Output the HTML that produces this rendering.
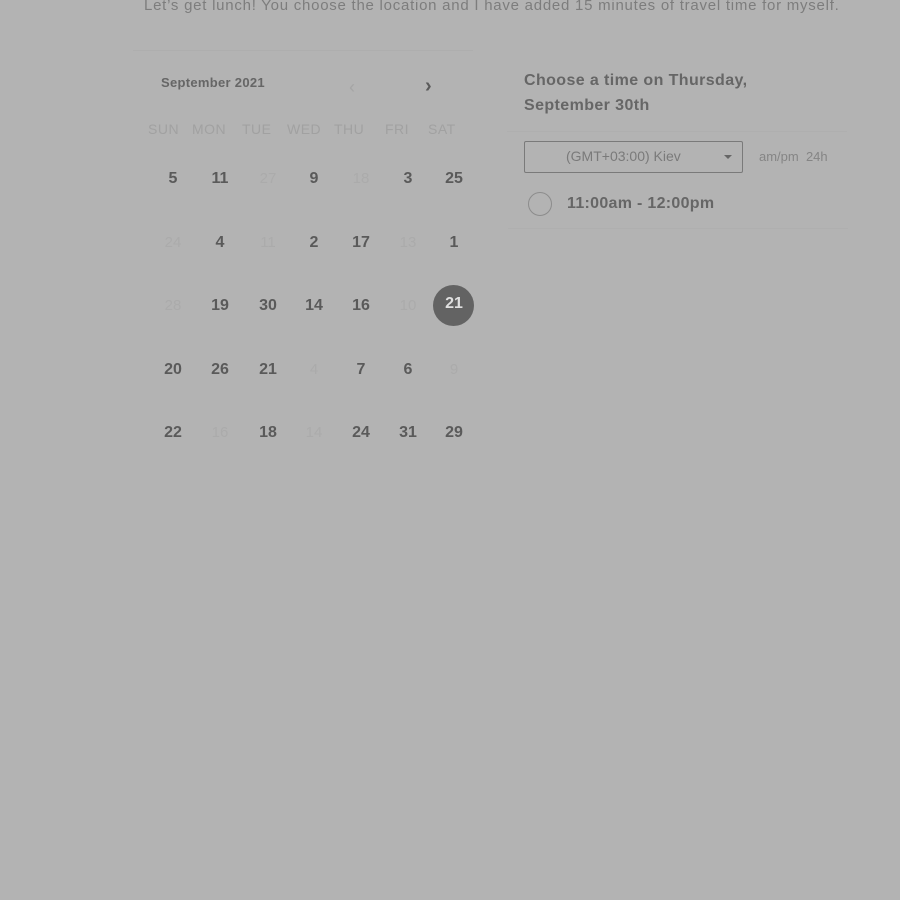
<!DOCTYPE html>
<html><head><meta charset="utf-8"><style>
body{margin:0;width:900px;height:900px;background:#b3b3b3;font-family:"Liberation Sans",sans-serif;position:relative;overflow:hidden}
.a{position:absolute;white-space:nowrap}
.n{position:absolute;width:40px;margin-left:-20px;text-align:center;font-size:16px;font-weight:bold;color:#5a5a5a}
.f{color:#ababab;font-weight:normal;font-size:15px}
.d{position:absolute;font-size:14px;color:#a1a1a1;letter-spacing:.5px}
</style></head><body>
<div class="a" style="left:144px;top:-3px;font-size:15px;color:#7d7d7d;letter-spacing:.75px">Let’s get lunch! You choose the location and I have added 15 minutes of travel time for myself.</div>
<div class="a" style="left:133px;top:50px;width:340px;border-top:1px solid #aeaeae"></div>
<div class="a" style="left:161px;top:75px;font-size:13px;font-weight:bold;color:#666;letter-spacing:.3px">September 2021</div>
<div class="a" style="left:349px;top:77px;font-size:18px;color:#a5a5a5">‹</div>
<div class="a" style="left:425px;top:75px;font-size:20px;color:#5a5a5a;font-weight:bold">›</div>
<div class="d" style="left:148px;top:121px">SUN</div>
<div class="d" style="left:192px;top:121px">MON</div>
<div class="d" style="left:242px;top:121px">TUE</div>
<div class="d" style="left:287px;top:121px">WED</div>
<div class="d" style="left:334px;top:121px">THU</div>
<div class="d" style="left:385px;top:121px">FRI</div>
<div class="d" style="left:428px;top:121px">SAT</div>
<div class="a" style="left:433px;top:285px;width:41px;height:41px;border-radius:50%;background:#636363"></div>
<div id="g"></div>
<script>
var r=[[179,"5,11,27f,9,18f,3,25"],[243,"24f,4,11f,2,17,13f,1"],[306,"28f,19,30,14,16,10f,21s"],[370,"20,26,21,4f,7,6,9f"],[433,"22,16f,18,14f,24,31,29"]];
var xs=[172,219,267,313,360,407,453],h="";
r.forEach(function(w){w[1].split(",").forEach(function(v,i){var c="n",s="";if(v.endsWith("f")){c+=" f";v=v.slice(0,-1)}if(v.endsWith("s")){v=v.slice(0,-1);s="color:#e0e0e0;top:0;"}h+='<div class="'+c+'" style="'+s+'left:'+(xs[i]+1)+'px;top:'+(w[0]-9-(s?2:0))+'px">'+v+'</div>'})});
document.getElementById("g").innerHTML=h;
</script>
<div class="a" style="left:524px;top:68px;font-size:16px;font-weight:bold;color:#666;line-height:25px;letter-spacing:.4px">Choose a time on Thursday,<br>September 30th</div>
<div class="a" style="left:507px;top:131px;width:340px;border-top:1px solid #afafaf"></div>
<div class="a" style="left:524px;top:141px;width:217px;height:30px;border:1px solid #7a7a7a;border-radius:2px"></div>
<div class="a" style="left:566px;top:148px;font-size:14px;color:#7a7a7a">(GMT+03:00) Kiev</div>
<div class="a" style="left:724px;top:155px;width:0;height:0;border-left:4px solid transparent;border-right:4px solid transparent;border-top:4px solid #666"></div>
<div class="a" style="left:759px;top:149px;font-size:13px;color:#858585">am/pm&nbsp; 24h</div>
<div class="a" style="left:528px;top:192px;width:22px;height:22px;border:1.5px solid #8c8c8c;border-radius:50%"></div>
<div class="a" style="left:567px;top:195px;font-size:16px;font-weight:bold;color:#666;letter-spacing:.3px">11:00am - 12:00pm</div>
<div class="a" style="left:508px;top:228px;width:340px;border-top:1px solid #afafaf"></div>
</body></html>
